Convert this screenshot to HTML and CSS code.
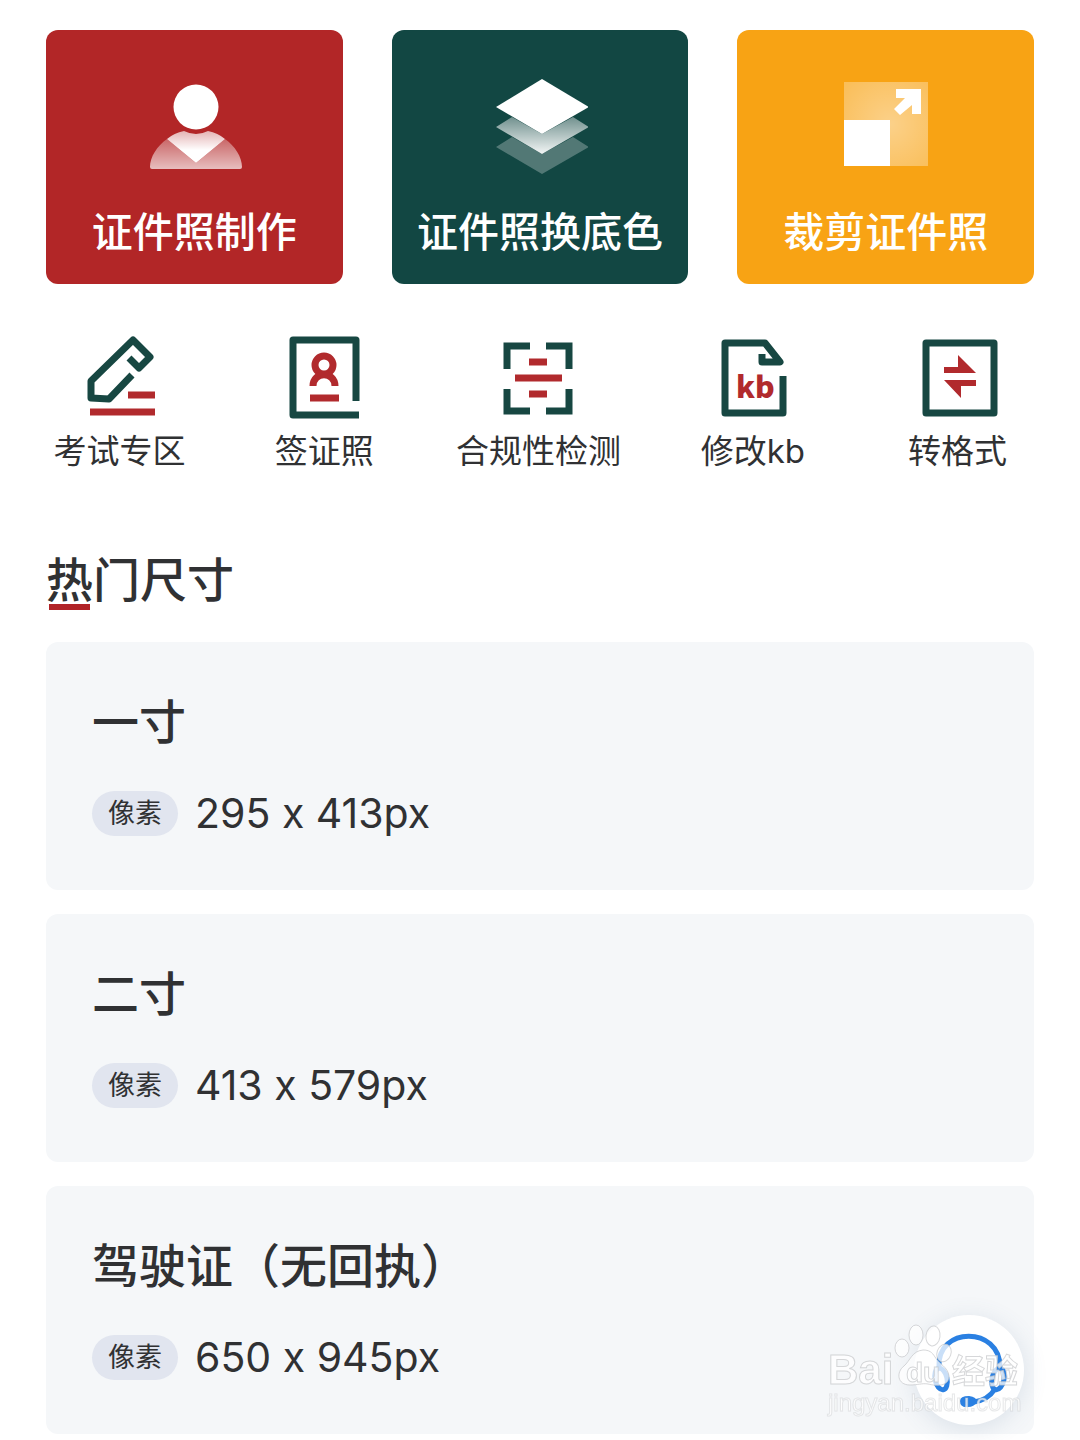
FILE: index.html
```html
<!DOCTYPE html>
<html lang="zh-CN">
<head>
    <meta charset="UTF-8">
    <meta name="viewport" content="width=device-width, initial-scale=1.0">
    <title>证件照制作</title>
    <link rel="stylesheet" href="styles.css">
</head>
<body>

  <main>
    <div class="tiles">
      <button class="tile red" type="button">
        <svg class="tile-icon" viewBox="0 0 96 96" aria-hidden="true">
          <defs>
            <linearGradient id="coat" x1="0" y1="0" x2="0" y2="1">
              <stop offset="0" stop-color="#fff" stop-opacity="0.3"/>
              <stop offset="1" stop-color="#fff" stop-opacity="0.7"/>
            </linearGradient>
            <linearGradient id="collar" x1="0" y1="0" x2="0" y2="1">
              <stop offset="0" stop-color="#fff" stop-opacity="0.65"/>
              <stop offset="0.6" stop-color="#fff"/>
            </linearGradient>
          </defs>
          <circle cx="50" cy="28" r="22.500" fill="#fff"/>
          <path d="M21 60L50 84L79 60C89 67 96 78 96 88Q96 90 94 90H6Q4 90 4 88C4 78 11 67 21 60Z" fill="url(#coat)"/>
          <path d="M21 60Q28 54 38 52Q50 58 62 52Q72 54 79 60L50 84Z" fill="url(#collar)"/>
        </svg>
        <span>证件照制作</span>
      </button>
      <button class="tile green" type="button">
        <svg class="tile-icon" viewBox="0 0 96 96" aria-hidden="true">
          <defs>
            <linearGradient id="layer" x1="0" y1="0" x2="0" y2="1">
              <stop offset="0" stop-color="#fff" stop-opacity="0.4"/>
              <stop offset="1" stop-color="#fff" stop-opacity="0.95"/>
            </linearGradient>
          </defs>
          <path d="M50 0L97 28L50 55L4 28Z" fill="#fff"/>
          <path d="M4 48L20 38L50 55L81 38L97 48L50 75Z" fill="url(#layer)"/>
          <path d="M4 68L20 58L50 75L81 58L97 68L50 95Z" fill="#fff" fill-opacity="0.27"/>
        </svg>
        <span>证件照换底色</span>
      </button>
      <button class="tile orange" type="button">
        <svg class="tile-icon" viewBox="0 0 96 96" aria-hidden="true">
          <defs>
            <radialGradient id="frame" cx="0.55" cy="0.5" r="0.7">
              <stop offset="0" stop-color="#fff" stop-opacity="0.5"/>
              <stop offset="1" stop-color="#fff" stop-opacity="0.3"/>
            </radialGradient>
          </defs>
          <rect x="6" y="3" width="84" height="84" fill="url(#frame)"/>
          <rect x="6" y="41" width="46" height="46" fill="#fff"/>
          <path d="M58 10H83V35H74V26L62 36L56 30L67 19H58Z" fill="#fff"/>
        </svg>
        <span>裁剪证件照</span>
      </button>
    </div>

    <nav class="tools">
      <a class="tool" href="#">
        <svg viewBox="0 0 84 84" aria-hidden="true">
          <path class="dark" d="M55 40L32 64L14 63V46L56 5L73 22L62 33L52 23" stroke-linejoin="round"/>
          <path class="accent" d="M51 60H78M13 77H78"/>
        </svg>
        <span>考试专区</span>
      </a>
      <a class="tool" href="#">
        <svg viewBox="0 0 84 84" aria-hidden="true">
          <path class="dark" d="M74 66V5H11V80H77" stroke-linejoin="round"/>
          <circle class="accent" cx="42" cy="30" r="9"/>
          <path class="accent" d="M31 51C31 36 53 36 53 51M28 63H57"/>
        </svg>
        <span>签证照</span>
      </a>
      <a class="tool" href="#">
        <svg viewBox="0 0 84 84" aria-hidden="true">
          <path class="dark" d="M34 11H11V34M50 11H73V34M34 76H11V54M50 76H73V54"/>
          <path class="accent" d="M33 27H51M19 43H66M33 59H51"/>
        </svg>
        <span>合规性检测</span>
      </a>
      <a class="tool" href="#">
        <svg viewBox="0 0 84 84" aria-hidden="true">
          <path class="dark" d="M72 41V78H14V8H54L69 27H51V19" stroke-linejoin="round"/>
          <text class="icon-text" x="25" y="63">kb</text>
        </svg>
        <span>修改kb</span>
      </a>
      <a class="tool" href="#">
        <svg viewBox="0 0 84 84" aria-hidden="true">
          <rect class="dark" x="10" y="8" width="68" height="70" stroke-linejoin="round"/>
          <path d="M28 32H42V20L60 38H28ZM60 51H45V63L28 45H60Z" fill="#b12a2d"/>
        </svg>
        <span>转格式</span>
      </a>
    </nav>

    <section class="sizes">
      <h1><span class="underline">热</span>门尺寸</h1>

      <a class="card" href="#">
        <h2>一寸</h2>
        <p><span class="badge">像素</span>295 x 413px</p>
      </a>
      <a class="card" href="#">
        <h2>二寸</h2>
        <p><span class="badge">像素</span>413 x 579px</p>
      </a>
      <a class="card" href="#">
        <h2>驾驶证（无回执）</h2>
        <p><span class="badge">像素</span>650 x 945px</p>
      </a>
    </section>
  </main>

  <button class="service" type="button" aria-label="客服">
    <svg viewBox="0 0 110 110" aria-hidden="true">
      <path d="M25 52C23 11 86 11 86 52"/>
      <ellipse cx="27" cy="64" rx="6" ry="11" transform="rotate(-12 27 64)"/>
      <ellipse cx="84" cy="64" rx="6" ry="11" transform="rotate(12 84 64)"/>
      <path d="M81 74Q74 85 60 87"/>
      <path d="M46 86Q46 81 55 81Q63 82 63 87Q60 92 54 92Q46 93 46 86Z" fill="#2a80e2" stroke="none"/>
    </svg>
  </button>

  <svg class="watermark" viewBox="0 10 210 110" aria-hidden="true">
    <ellipse cx="82" cy="38" rx="7" ry="9"/>
    <ellipse cx="96" cy="25" rx="7" ry="10"/>
    <ellipse cx="113" cy="26" rx="7" ry="10" transform="rotate(8 113 26)"/>
    <ellipse cx="124" cy="43" rx="7" ry="9" transform="rotate(20 124 43)"/>
    <path d="M103 40C92 41 90 51 84 56C76 62 77 75 90 75C98 75 102 73 108 74C116 76 129 77 129 66C128 57 119 54 115 47C112 42 109 40 103 40Z"/>
    <text class="brand" x="8" y="74" font-size="42">Bai</text>
    <text class="brand" x="86" y="72" font-size="28">du</text>
    <text class="brand" x="132" y="73" font-size="33">经验</text>
    <text class="site" x="8" y="101" font-size="24">jingyan.baidu.com</text>
  </svg>

</body>
</html>
```

FILE: styles.css
```css
* {
  box-sizing: border-box;
}

body {
  margin: 0;
  color: #303133;
  background-color: #fff;
  font-family: Inter, "Noto Sans CJK SC", sans-serif;
}

h1, h2, p {
  margin: 0;
}

a {
  color: inherit;
  text-decoration: none;
}

button {
  border: none;
  padding: 0;
  cursor: pointer;
  font-family: inherit;
}

main {
  padding-top: 30px;
}

/* top tiles */
.tiles {
  display: grid;
  grid-template-columns: repeat(3, 1fr);
  gap: 49px;
  padding: 0 46px;
}

.tile {
  display: flex;
  flex-direction: column;
  align-items: center;
  gap: 33px;
  padding: 49px 0 28px;
  border-radius: 12px;
  color: #fff;
  font-size: 41px;
  font-weight: 500;
  line-height: 48px;
  white-space: nowrap;
}

.tile-icon {
  width: 96px;
  height: 96px;
}

.red {
  background-color: #b22627;
}

.green {
  background-color: #124743;
}

.orange {
  background-color: #f8a314;
}

/* tool links */
.tools {
  display: grid;
  grid-template-columns: 205fr 205fr 224fr 205fr 205fr;
  padding: 0 20px 0 17px;
  margin-top: 51px;
}

.tool {
  display: flex;
  flex-direction: column;
  align-items: center;
  gap: 12px;
  font-size: 33px;
  line-height: 40px;
  white-space: nowrap;
}

.tool svg {
  width: 84px;
  height: 84px;
}

.dark {
  fill: none;
  stroke: #174742;
  stroke-width: 7px;
}

.accent {
  fill: none;
  stroke: #b12a2d;
  stroke-width: 7px;
}

.icon-text {
  fill: #b12a2d;
  font-family: "Noto Sans CJK SC", sans-serif;
  font-size: 30px;
  font-weight: 900;
}

/* sizes list */
.sizes {
  display: flex;
  flex-direction: column;
  gap: 24px;
  padding: 0 46px;
  margin-top: 81px;
}

h1, h2 {
  font-size: 47px;
  font-weight: 500;
  line-height: 56px;
}

h1 {
  margin-bottom: 10px;
}

.underline {
  position: relative;
}

.underline::after {
  content: "";
  position: absolute;
  left: 3px;
  right: 3px;
  bottom: -2px;
  height: 6px;
  background-color: #b12327;
}

.card {
  display: block;
  padding: 52px 46px 54px;
  border-radius: 12px;
  background-color: #f5f7f9;
}

.card p {
  display: flex;
  align-items: center;
  gap: 17px;
  margin-top: 41px;
  font-size: 41px;
  line-height: 45px;
  /* keep the plain x between the numbers */
  font-variant-ligatures: no-contextual;
}

.badge {
  padding: 0 16px;
  border-radius: 23px;
  background-color: #e1e5ef;
  font-size: 27px;
}

/* floating service button */
.service {
  position: fixed;
  right: 56px;
  bottom: 15px;
  width: 110px;
  height: 110px;
  border-radius: 50%;
  background-color: #fff;
  box-shadow: 0 4px 24px rgba(80, 110, 150, 0.16);
}

.service svg {
  display: block;
  fill: none;
  stroke: #2a80e2;
  stroke-width: 5px;
}

.watermark {
  position: fixed;
  right: 50px;
  bottom: 10px;
  width: 210px;
  height: 110px;
  pointer-events: none;
  fill: #fff;
  fill-opacity: 0.75;
  stroke: #c4c6c9;
  stroke-opacity: 0.7;
}

.brand {
  font-family: "Liberation Sans", "Noto Sans CJK SC", sans-serif;
  font-weight: 700;
}

.site {
  font-family: "Liberation Sans", sans-serif;
  stroke-opacity: 0.4;
}
```
